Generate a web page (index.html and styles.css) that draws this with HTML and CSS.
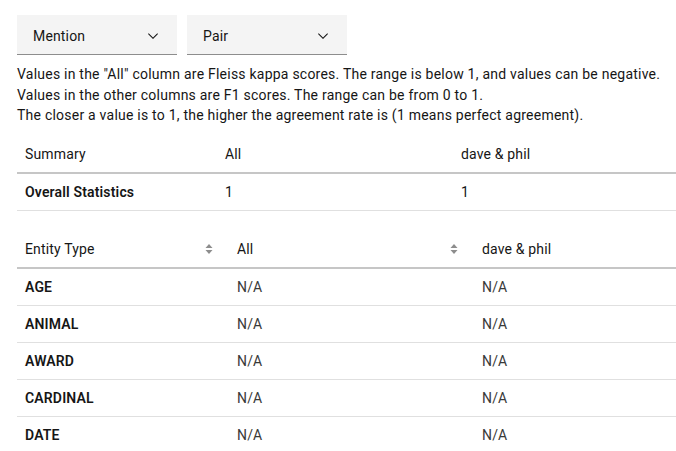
FILE: index.html
```html
<!DOCTYPE html>
<html>
<head>
<meta charset="utf-8">
<link rel="stylesheet" href="styles.css">
</head>
<body>
<div class="page">
  <div class="filters">
    <div class="select">
      <span>Mention</span>
      <svg class="chev" width="16" height="16" viewBox="0 0 16 16"><path d="M8 11L3 6 3.7 5.3 8 9.6 12.3 5.3 13 6z"/></svg>
    </div>
    <div class="select">
      <span>Pair</span>
      <svg class="chev" width="16" height="16" viewBox="0 0 16 16"><path d="M8 11L3 6 3.7 5.3 8 9.6 12.3 5.3 13 6z"/></svg>
    </div>
  </div>
  <p class="note">Values in the "All" column are Fleiss kappa scores. The range is below 1, and values can be negative.<br>Values in the other columns are F1 scores. The range can be from 0 to 1.<br>The closer a value is to 1, the higher the agreement rate is (1 means perfect agreement).</p>

  <table class="tbl summary">
    <colgroup><col class="s1"><col class="s2"><col class="s3"></colgroup>
    <thead>
      <tr><th>Summary</th><th>All</th><th>dave &amp; phil</th></tr>
    </thead>
    <tbody>
      <tr><td class="lbl">Overall Statistics</td><td class="num">1</td><td class="num">1</td></tr>
    </tbody>
  </table>

  <table class="tbl entity">
    <colgroup><col class="e1"><col class="e2"><col class="e3"></colgroup>
    <thead>
      <tr>
        <th><div class="sorth"><span>Entity Type</span><svg class="sort" width="8" height="10" viewBox="0 0 8 10"><path d="M4 0L7.5 4H0.5z M4 10L0.5 6H7.5z"/></svg></div></th>
        <th><div class="sorth"><span>All</span><svg class="sort" width="8" height="10" viewBox="0 0 8 10"><path d="M4 0L7.5 4H0.5z M4 10L0.5 6H7.5z"/></svg></div></th>
        <th>dave &amp; phil</th>
      </tr>
    </thead>
    <tbody>
      <tr><td class="lbl">AGE</td><td class="na">N/A</td><td class="na">N/A</td></tr>
      <tr><td class="lbl">ANIMAL</td><td class="na">N/A</td><td class="na">N/A</td></tr>
      <tr><td class="lbl">AWARD</td><td class="na">N/A</td><td class="na">N/A</td></tr>
      <tr><td class="lbl">CARDINAL</td><td class="na">N/A</td><td class="na">N/A</td></tr>
      <tr><td class="lbl">DATE</td><td class="na">N/A</td><td class="na">N/A</td></tr>
    </tbody>
  </table>
</div>
</body>
</html>
```

FILE: styles.css
```css
html, body {
  margin: 0;
  padding: 0;
  background: #ffffff;
  overflow: hidden;
}
body {
  font-family: Roboto, "Liberation Sans", sans-serif;
  font-size: 14px;
  line-height: 18px;
  color: #161616;
  letter-spacing: 0.16px;
}
.page {
  padding: 15px 0 0 17px;
  width: 659px;
}
.filters {
  display: flex;
  gap: 10px;
}
.select {
  width: 160px;
  height: 40px;
  box-sizing: border-box;
  background: #f4f4f4;
  border-bottom: 1px solid #8d8d8d;
  display: flex;
  align-items: center;
  justify-content: space-between;
  padding: 2px 16px 0 16px;
}
.chev {
  fill: #161616;
}
.note {
  margin: 9px 0 0 0;
  line-height: 20.5px;
  color: #161616;
  white-space: nowrap;
  letter-spacing: 0.23px;
}
.tbl {
  width: 659px;
  border-collapse: collapse;
  table-layout: fixed;
}
.summary {
  margin-top: 10px;
}
.entity {
  margin-top: 20px;
}
.s1 { width: 200px; }
.s2 { width: 236px; }
.s3 { width: 223px; }
.e1 { width: 212px; }
.e2 { width: 245px; }
.e3 { width: 202px; }
.tbl th {
  text-align: left;
  font-weight: 400;
  height: 36px;
  padding: 0 8px;
  border-bottom: 2px solid #c6c6c6;
  vertical-align: middle;
}
.tbl td {
  height: 36px;
  padding: 0 8px;
  border-bottom: 1px solid #e0e0e0;
  vertical-align: middle;
}
.entity tbody tr:last-child td {
  border-bottom: none;
}
.lbl {
  font-weight: 600;
}
.na {
  color: #393939;
}
.sorth {
  display: flex;
  align-items: center;
  justify-content: space-between;
  padding-right: 8px;
}
.sort {
  fill: #8d8d8d;
}
```
